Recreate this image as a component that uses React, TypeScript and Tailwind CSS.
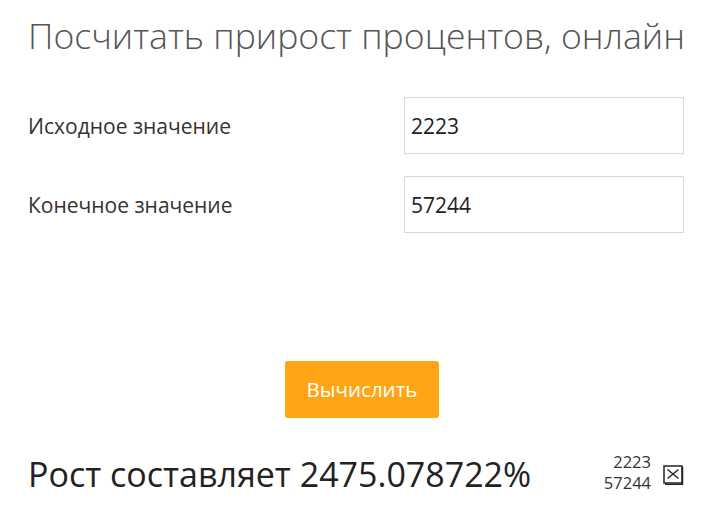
export default function App() {
  return (
    <div className="w-[724px] h-[529px] bg-white overflow-hidden font-['Open_Sans',sans-serif]">
      <div className="pl-[28px] pr-[40px]">
        <h1 className="pt-[9px] text-[35.6px] leading-[52px] font-light text-[#555555] whitespace-nowrap">
          Посчитать прирост процентов, онлайн
        </h1>

        <div className="mt-[36px] flex flex-col gap-[22px]">
          <div className="flex items-center justify-between">
            <label className="pt-[3px] text-[21px] text-[#333333]">Исходное значение</label>
            <input
              defaultValue="2223"
              className="w-[280px] h-[57px] border border-[#d6d9dc] px-[6px] text-[21px] text-[#222222] outline-none"
            />
          </div>
          <div className="flex items-center justify-between">
            <label className="pt-[3px] text-[21px] text-[#333333]">Конечное значение</label>
            <input
              defaultValue="57244"
              className="w-[280px] h-[57px] border border-[#d6d9dc] px-[6px] text-[21px] text-[#222222] outline-none"
            />
          </div>
        </div>

        <div className="mt-[128px] flex justify-center pl-[12px]">
          <button className="w-[154px] h-[57px] rounded-[3px] bg-[#ffa412] text-white text-[20.5px]">
            Вычислить
          </button>
        </div>

        <div className="mt-[31px] flex items-center justify-between">
          <div className="text-[34px] text-[#222222] whitespace-nowrap">Рост составляет 2475.078722%</div>
          <div className="flex items-start gap-[12px] -mt-[6px]">
            <div className="text-right text-[16.5px] leading-[21px] text-[#333333]">
              <div>2223</div>
              <div>57244</div>
            </div>
            <svg width="21" height="20" viewBox="0 0 21 20" className="mt-[14px]">
              <rect x="1" y="1" width="18" height="17" fill="none" stroke="#222" strokeWidth="1.5" />
              <path d="M19.5 2v17.5H2" fill="none" stroke="#222" strokeWidth="1.5" />
              <path d="M4.5 4.5l11 9M15.5 4.5l-11 9" stroke="#222" strokeWidth="1.4" />
            </svg>
          </div>
        </div>
      </div>
    </div>
  );
}
